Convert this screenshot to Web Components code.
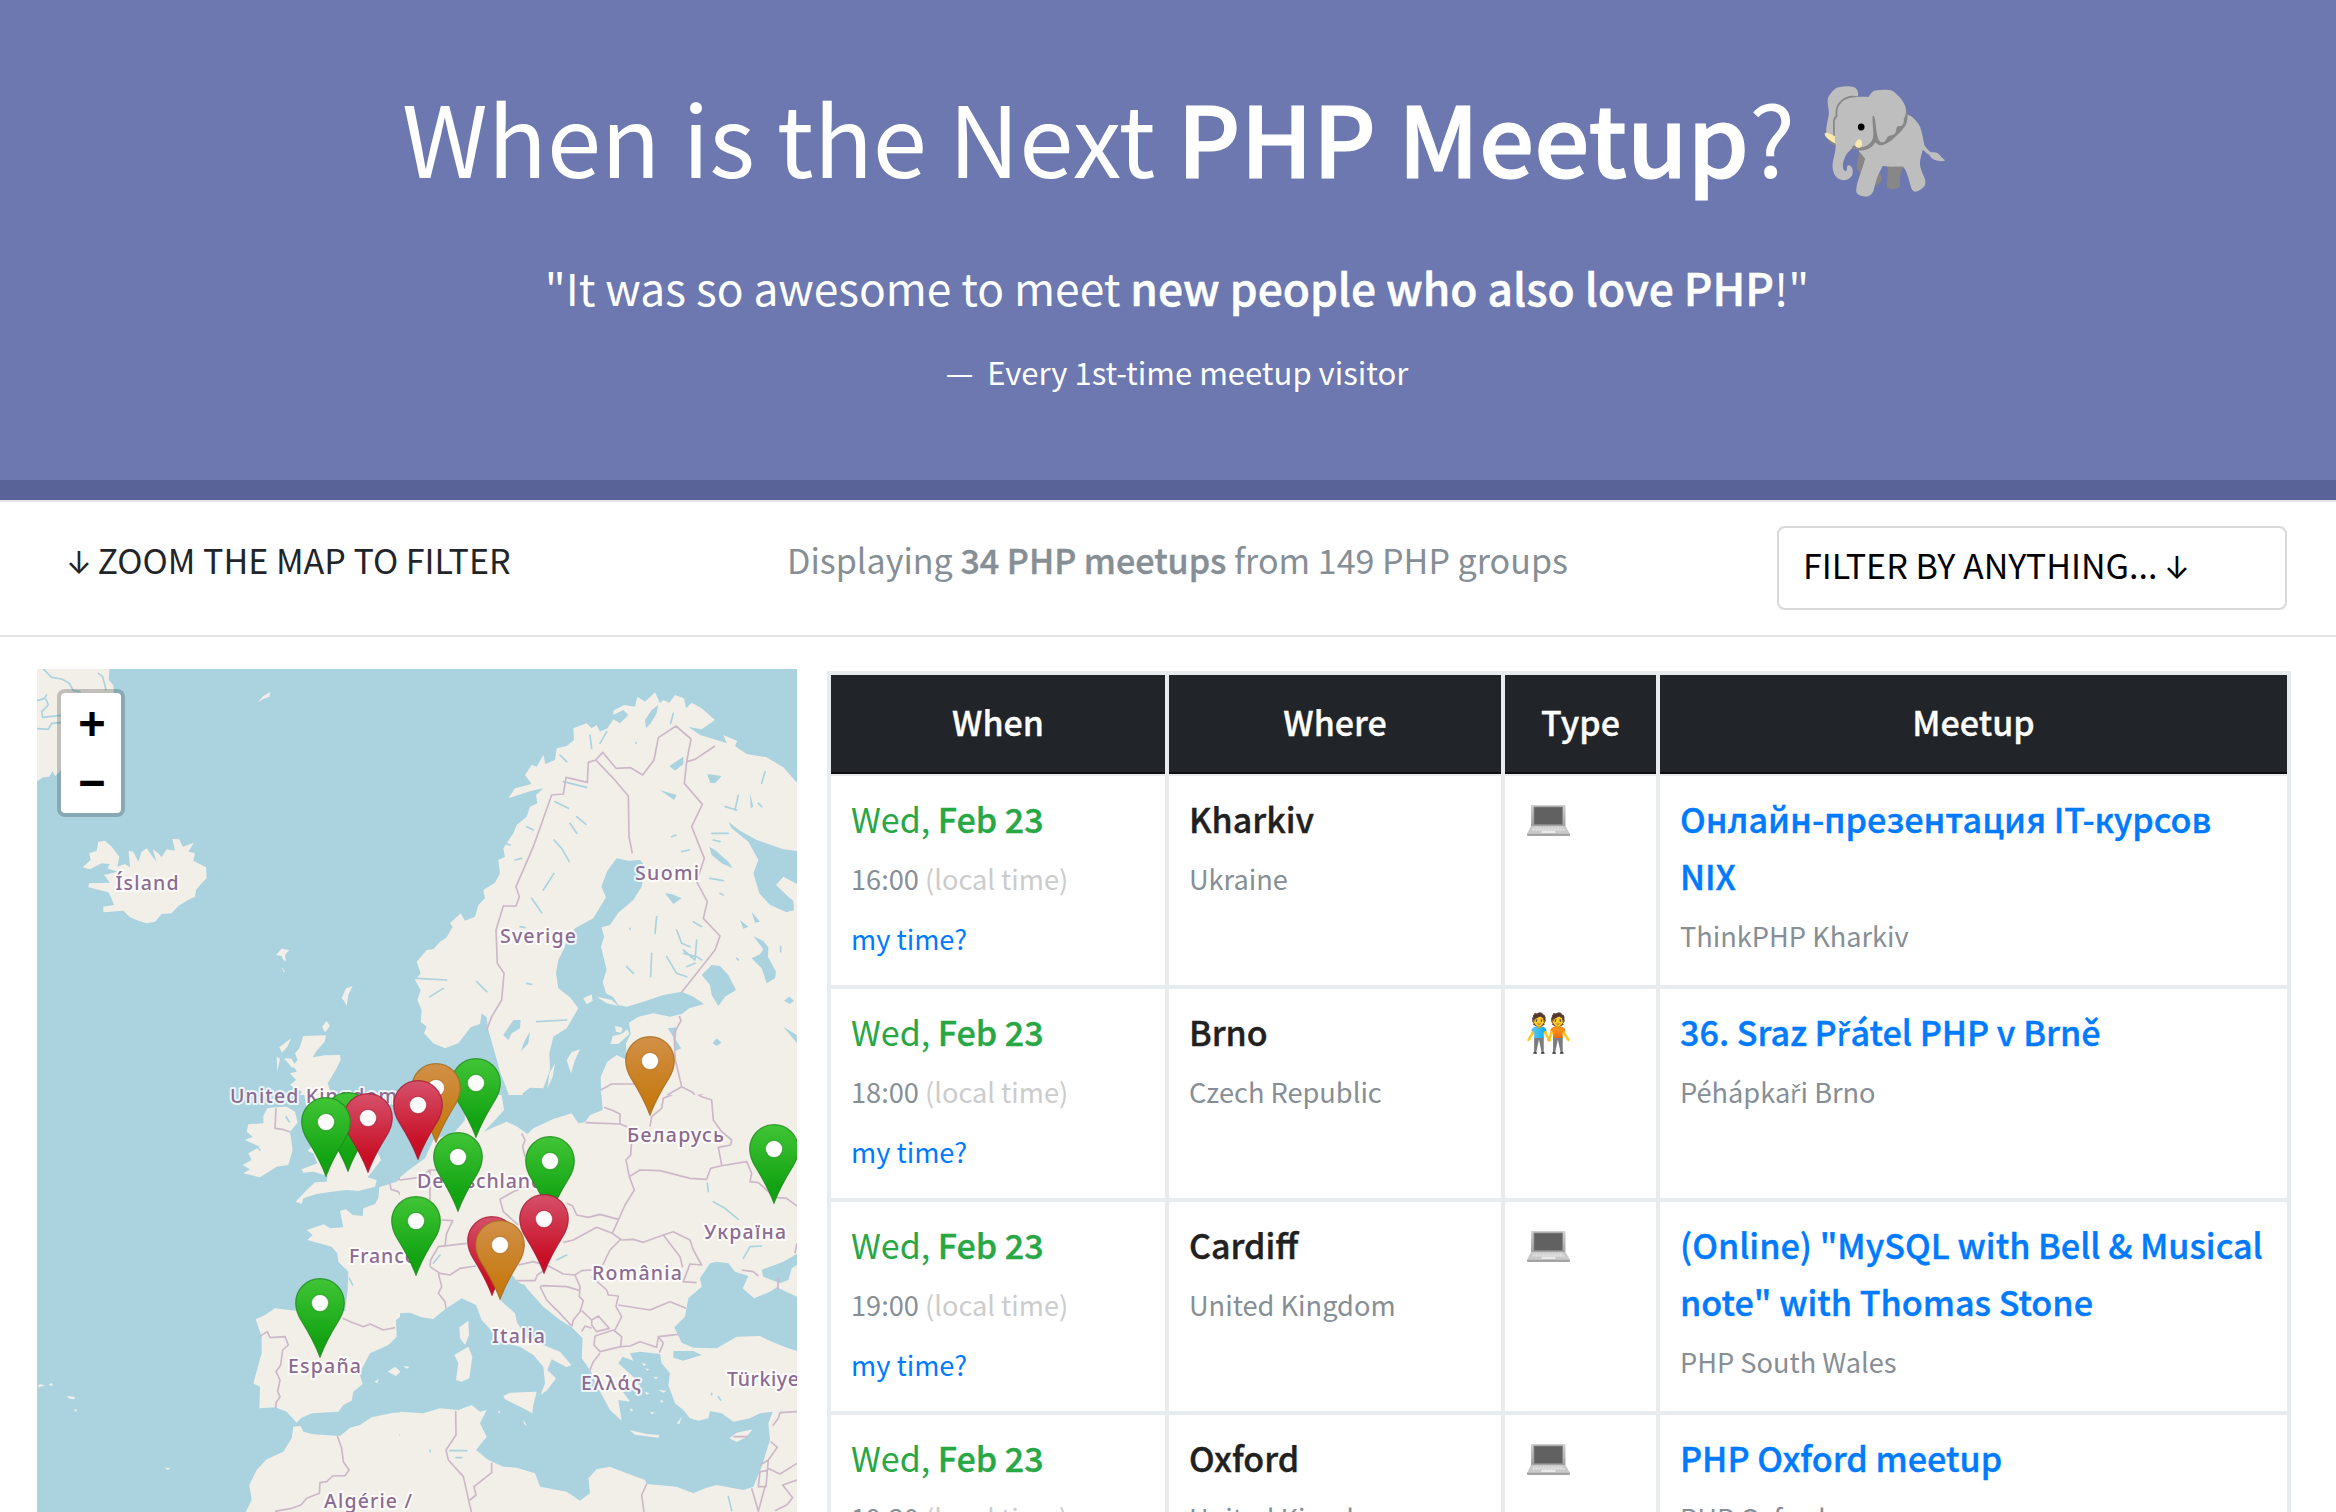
<!DOCTYPE html>
<html lang="en">
<head>
<meta charset="utf-8">
<title>When is the Next PHP Meetup?</title>
<style>
  html, body { margin: 0; height: 1512px; overflow: hidden; background: #fff; }
  body {
    font-family: "Noto Sans CJK SC", "Noto Color Emoji", sans-serif;
    color: #212529;
  }
</style>
</head>
<body>
<meetup-app></meetup-app>

<script>
const define = (name, html) => {
  const tpl = document.createElement('template');
  tpl.innerHTML = html;
  customElements.define(name, class extends HTMLElement {
    constructor() {
      super();
      this.attachShadow({ mode: 'open' }).append(tpl.content.cloneNode(true));
    }
  });
};

/* ---------- page header ---------- */
define('page-hero', `
<style>
  :host { display: flex; flex-direction: column; align-items: center; box-sizing: border-box; height: 500px;
    padding: 71px 0 0 18px; background: #6c78af; border-bottom: 20px solid #596398; color: #fff; white-space: nowrap; }
  h1 { margin: 0; padding-left: 1px; font-size: 97.6px; line-height: 130px; height: 130px; font-weight: 400; }
  b, ::slotted(b) { font-weight: 500; -webkit-text-stroke: .012em currentColor; }
  .emoji { font-family: "Noto Color Emoji"; font-size: 109px; line-height: 0; }
  .quote { margin: 56px 0 0; font-size: 44.3px; line-height: 60px; }
  .by { margin: 29.5px 0 0; font-size: 31px; line-height: 50px; }
</style>
<h1>When is the Next <b>PHP Meetup</b>? <span class="emoji">🐘</span></h1>
<p class="quote">"It was so awesome to meet <b>new people who also love PHP</b>!"</p>
<p class="by">—&nbsp; Every 1st-time meetup visitor</p>
`);

/* ---------- toolbar ---------- */
define('down-arrow', `
<style>:host { display: inline; font-family: Inter, sans-serif; font-size: 31px; line-height: 0; margin: 0 -2px 0 -1px; }</style>↓`);

define('filter-bar', `
<style>
  :host { display: grid; grid-template-columns: 720px 990px 510px; box-sizing: border-box; height: 137px; padding: 24px 0 0 67px;
    border-top: 2px solid #e5e5e5; border-bottom: 2px solid #e5e5e5; font-size: 34.05px; line-height: 50px; white-space: nowrap; }
  .hint { padding-top: 9px; }
  .count { padding-top: 9px; color: #868e96; }
  b { font-weight: 500; -webkit-text-stroke: .012em currentColor; }
  .box { box-sizing: border-box; height: 84px; padding: 12px 24px; border: 2px solid #d9d9d9; border-radius: 8px; color: #000; }
</style>
<div class="hint"><down-arrow></down-arrow> ZOOM THE MAP TO FILTER</div>
<div class="count">Displaying <b>34 PHP meetups</b> from 149 PHP groups</div>
<div class="box">FILTER BY ANYTHING... <down-arrow></down-arrow></div>
`);

/* ---------- table ---------- */
define('laptop-icon', `
<style>:host { display: block; width: 43px; height: 31px; } svg { display: block; }</style>
<svg width="43" height="31" viewBox="0 0 43 31">
  <defs><linearGradient id="b" x1="0" y1="0" x2="0" y2="1"><stop offset="0" stop-color="#cfcfcf"/><stop offset="1" stop-color="#a2a2a2"/></linearGradient></defs>
  <path d="M5 0H37.500Q38.500 0 38.500 1V21H4V1Q4 0 5 0Z" fill="url(#b)"/>
  <rect x="7" y="2" width="28.500" height="17.500" fill="#616161" stroke="#858585" stroke-width=".8"/>
  <path d="M4 21H38.500L43 29H0Z" fill="#c9c9c9"/>
  <path d="M6.500 23H36.500M5.500 24.800H37.500" stroke="#eee" stroke-width="1.200" stroke-dasharray="2 1"/>
  <path d="M15 25.800H28L28.800 28H14Z" fill="#eaeaea"/>
  <path d="M0 28.700H43V30Q43 31 42 31H1Q0 31 0 30Z" fill="#a3a3a3"/>
</svg>`);

define('meetup-head', `
<style>
  :host { display: grid; grid-template-columns: 334px 332px 151px 627px; column-gap: 4px; font-size: 34px; font-weight: 500; color: #fff; }
  div { height: 97px; line-height: 94px; text-align: center; background: #212529; border-bottom: 2px solid #0d0f10; -webkit-text-stroke: .01em currentColor; }
</style>
<div>When</div><div>Where</div><div>Type</div><div>Meetup</div>
`);

define('meetup-row', `
<style>
  :host { display: grid; grid-template-columns: 334px 332px 151px 627px; column-gap: 4px; height: 209px; margin-bottom: 4px;
    font-size: 34px; line-height: 57px; }
  .c { background: #fff; padding: 14px 0 0 20px; white-space: nowrap; overflow: hidden; }
  .date { color: #28a745; }
  b, .place, .title { font-weight: 500; -webkit-text-stroke: .012em currentColor; }
  .title { color: #007bff; font-size: 34.15px; }
  .place { color: #212121; }
  .small { font-size: 27.2px; padding-top: 3px; height: 57px; color: #868e96; }
  .small i { font-style: normal; color: #ccc; }
  .small.link { color: #007bff; }
  .emoji { font-family: "Noto Color Emoji"; font-size: 37.6px; line-height: 0; }
  ::slotted(laptop-icon) { margin: 15px 0 0 2px; }
</style>
<div class="c"><div class="date">Wed, <b>Feb 23</b></div><div class="small"><slot name="time"></slot> <i>(local time)</i></div><div class="small link">my time?</div></div>
<div class="c"><div class="place"><slot name="city"></slot></div><div class="small"><slot name="country"></slot></div></div>
<div class="c type"><span class="emoji"><slot name="type"></slot></span></div>
<div class="c"><div class="title"><slot name="title"></slot></div><div class="small"><slot name="group"></slot></div></div>
`);

define('meetup-table', `
<style>
  :host { display: block; box-sizing: border-box; width: 1464px; margin-top: 2px; padding: 4px; background: #e9ecef; }
  meetup-head { margin-bottom: 2px; }
  .cs { font-family: "Open Sans"; font-weight: 600; -webkit-text-stroke: 0; font-size: .93em; line-height: 0; }
  .cs.r { font-weight: 400; }
</style>
<meetup-head></meetup-head>
<meetup-row><span slot="time">16:00</span><span slot="city">Kharkiv</span><span slot="country">Ukraine</span><laptop-icon slot="type"></laptop-icon><span slot="title">Онлайн-презентация IT-курсов<br>NIX</span><span slot="group">ThinkPHP Kharkiv</span></meetup-row>
<meetup-row><span slot="time">18:00</span><span slot="city">Brno</span><span slot="country">Czech Republic</span><span slot="type">🧑‍🤝‍🧑</span><span slot="title">36. Sraz P<span class="cs">ř</span>átel PHP v Brně</span><span slot="group">Péhápka<span class="cs r">ř</span>i Brno</span></meetup-row>
<meetup-row><span slot="time">19:00</span><span slot="city">Cardiff</span><span slot="country">United Kingdom</span><laptop-icon slot="type"></laptop-icon><span slot="title">(Online) "MySQL with Bell &amp; Musical<br>note" with Thomas Stone</span><span slot="group">PHP South Wales</span></meetup-row>
<meetup-row><span slot="time">19:30</span><span slot="city">Oxford</span><span slot="country">United Kingdom</span><laptop-icon slot="type"></laptop-icon><span slot="title">PHP Oxford meetup</span><span slot="group">PHP Oxford</span></meetup-row>
`);

/* ---------- map ---------- */
define('zoom-control', `
<style>
  :host { display: block; width: 60px; border: 4px solid rgba(0,0,0,.2); border-radius: 8px; background: #fff; background-clip: padding-box; overflow: hidden; }
  div { height: 60px; box-sizing: border-box; font: bold 44px/60px "DejaVu Sans Mono", monospace; text-align: center; color: #000; padding-left: 2px; }
  div:first-child { border-bottom: 2px solid #ccc; }
  div:last-child { line-height: 57px; }
</style><div>+</div><div>−</div>`);

class MapPin extends HTMLElement {
  static colors = {
    green: ['#40c536', '#12a312', '#1f8a1b'],
    red: ['#d6506a', '#c80f25', '#a51c36'],
    amber: ['#d29048', '#c67a12', '#a66a1e']
  };
  connectedCallback() {
    const c = MapPin.colors[this.getAttribute('color')];
    this.attachShadow({ mode: 'open' }).innerHTML = `
<style>:host { display: block; width: 50px; height: 80px; } svg { display: block; }</style>
<svg width="50" height="80" viewBox="0 0 50 80">
<defs><linearGradient id="g" x1="0" y1="0" x2="0" y2="1"><stop offset="0" stop-color="${c[0]}"/><stop offset=".8" stop-color="${c[1]}"/></linearGradient></defs>
<path d="M25 79.2 C22 71 14 55 6.500 43 C2.500 36.500 .7 31 .7 25 C.7 11.500 11.500 .7 25 .7 C38.500 .7 49.300 11.500 49.300 25 C49.300 31 47.500 36.500 43.500 43 C36 55 28 71 25 79.200Z" fill="url(#g)" stroke="${c[2]}" stroke-width="1.2" stroke-opacity=".8"/>
<circle cx="25" cy="25" r="8.600" fill="#fdfdfd" stroke="${c[2]}" stroke-opacity=".55" stroke-width="1.200"/></svg>`;
  }
}
customElements.define('map-pin', MapPin);

define('map-tiles', `
<style>
  :host { display: block; }
  svg { display: block; }
  .l { fill: #f2efe9; }
  .w { fill: #aad3df; }
  .r { fill: none; stroke: #aad3df; stroke-width: 5; stroke-linecap: round; stroke-linejoin: round; }
  .b { fill: none; stroke: #ccb8c8; stroke-width: 5; stroke-linejoin: round; }
  text { font-family: "Noto Sans", sans-serif; font-size: 19.500px; font-weight: 500; fill: #8b6b91; stroke: #fff; stroke-opacity: .8; stroke-width: 4px; paint-order: stroke; stroke-linejoin: round; }
</style>
<svg width="760" height="843" viewBox="37 669 760 843">
<rect class="w" x="37" y="669" width="760" height="843"/>
<!-- north-west: Greenland, Iceland, Scotland -->
<svg x="37" y="669" width="363" height="426" viewBox="21 27 1089 1278">
  <path class="l" d="M0 0H240L236 60 250 75 252 110 230 120 90 335 75 348 68 333 58 350 40 352 21 364 0 370Z"/>
  <path class="r" d="M40 27L65 52 95 57 118 70 130 92 150 95M21 122L42 116 50 105M48 118L55 135 35 155 38 172 92 166M21 206L55 208 65 190 92 188M205 40L218 50 228 90" stroke-width="7"/>
  <path class="l" d="M158 622L182 600 178 580 200 572 205 545 225 542 245 560 268 590 262 620 285 612 300 622 296 572 310 575 325 605 335 575 350 565 364 585 380 606 368 568 385 580 395 592 410 568 435 572 427 537 448 538 458 560 492 548 475 575 495 580 490 602 528 622 530 655 515 670 498 690 495 710 470 722 445 738 425 760 395 762 375 785 350 790 325 782 300 772 280 752 220 757 220 740 252 735 243 712 235 697 175 682 178 670 240 668 222 645 262 635 232 625 240 612 215 610 180 628Z"/>
  <path class="l" d="M682 128L700 108 722 95 718 110 698 118ZM738 885L755 866 778 870 765 885 768 905 760 900 755 888ZM754 920L766 937 760 935ZM935 1015L948 985 968 978 955 1005 950 1038 942 1022ZM876 1100L890 1083 900 1098 885 1117ZM740 1190L750 1196 742 1235ZM748 1162L783 1135 772 1160 756 1178ZM762 1195L785 1196 800 1225 785 1222Z"/>
  <path class="l" d="M820 1128L888 1126 884 1145 860 1172 848 1192 885 1186 930 1185 932 1200 918 1228 905 1250 893 1270 910 1320H800L815 1295 780 1275 798 1260 780 1240 800 1235 790 1215 803 1200 795 1180 808 1165Z"/>
</svg>
<!-- north-east: Scandinavia, Finland, north-west Russia -->
<svg x="400" y="669" width="397" height="426" viewBox="0 27 1191 1278">
  <path class="l" d="M135 1165L100 1150 72 1120 80 1100 62 1085 65 1050 52 1020 62 990 45 960 62 940 50 905 80 870 100 868 120 845 140 832 158 800 150 790 182 760 195 782 225 770 235 735 255 715 250 690 285 668 300 640 295 600 315 590 310 565 340 520 350 495 380 470 390 440 412 430 408 405 430 385 395 392 325 415 345 385 395 372 375 345 395 315 410 320 430 285 436 312 465 300 470 265 500 258 522 240 520 205 560 190 575 205 590 195 600 215 622 205 640 178 660 190 685 165 670 150 640 165 640 152 672 135 705 140 712 110 735 125 765 97 780 130 790 120 808 128 825 105 852 115 858 145 875 128 905 145 922 160 945 180 905 208 865 200 900 225 950 240 980 250 970 225 1012 243 1005 258 1040 282 1100 292 1150 322 1191 368 1250 400V1400H330L325 1300 300 1235 285 1180 265 1110 260 1072 245 1060 240 1092 212 1102 175 1150Z"/>
  <path class="w" d="M650 595L685 602 720 600 736 620 725 680 700 720 655 758 630 795 605 802 612 830 603 860 620 930 608 965 618 1000 640 1012 655 1035 680 1040 730 1025 790 1005 845 995 880 1010 912 1032 868 1045 845 1062 810 1070 760 1060 715 1070 687 1088 692 1122 678 1150 680 1200 650 1185 622 1205 602 1250 606 1400H380L368 1300 390 1283 430 1285 450 1230 448 1180 460 1130 500 1105 535 1045 510 1012 475 985 468 940 475 900 495 860 500 840 525 805 580 775 598 745 618 712 604 680 622 632Z"/>
  <path class="w" d="M985 485L1020 512 1070 540 1150 568 1250 580V690L1191 672 1150 650 1128 675 1165 710 1180 722 1182 750 1160 757 1110 735 1078 700 1060 640 1075 600 1045 545 995 505ZM738 205L735 180 755 150 775 135 770 160 752 190Z"/>
  <path class="w" d="M935 915L960 918 985 945 1008 990 975 1010 955 1038 935 1005 930 975 905 945ZM1060 828L1090 843 1105 862 1104 890 1128 935 1125 955 1100 970 1085 925 1055 895 1080 883 1090 868ZM310 1125L340 1080 362 1080 360 1105 335 1120 325 1140ZM362 1175L375 1140 390 1115 385 1150ZM803 1105L830 1102 828 1140 843 1165 828 1172 820 1130ZM808 318L850 290 850 312 825 332ZM795 700L815 702 845 715 820 732ZM928 560L945 570 985 605 998 625 965 610 935 585ZM922 342L965 348 945 370 930 368ZM1152 1022L1168 1010 1182 1022 1170 1032ZM938 1150L950 1135 965 1148 950 1158ZM1150 1100L1190 1125 1191 1150ZM1050 400L1060 440 1052 445ZM780 390L830 405 822 420ZM310 1085L330 1100ZM1055 755L1080 785 1065 788ZM1020 780L1045 800 1030 806Z"/>
  <path class="r" d="M465 425L505 445M530 470L558 493M462 540L485 565 508 605M430 690L462 640M395 715L425 758M510 490L530 520M490 365L560 382M845 575L868 570M815 530L828 525M930 655L970 662M880 785L905 800M770 770L765 820M830 810L845 850 870 860M850 880L890 890 905 900M860 920L885 910M755 880L752 950M800 890L830 940 860 950M680 920L700 940M890 840L885 900 850 870M1005 450L1015 405M975 440L1010 450M1085 370L1095 335M1142 860V875M935 520L985 520M940 540L960 545M230 965L260 995M380 970L395 973M50 955L140 960M90 1010L130 985M360 800L375 803M410 1085L500 1080M1075 430L1085 440M960 700L970 705M690 805V808M708 248V250M330 555L300 545M380 500L400 510M620 215L600 250M570 225L575 265M480 285L500 305M820 160L812 190M345 600L365 595M1010 895L1015 900" stroke-width="6"/>
  <path class="l" d="M632 1152L638 1128 665 1122 682 1108 688 1122 655 1152ZM645 1098L668 1103 664 1118 648 1115ZM500 1200L515 1176 540 1168 525 1200 513 1240ZM550 1015L575 1003 578 1022 560 1033ZM590 1010L635 1020 655 1038 620 1030ZM442 1285L448 1240 465 1210 458 1250Z"/>
  <path class="b" d="M260 1110L275 1070 305 1020 312 940 292 910 288 810 310 738 348 738 358 710 348 680 400 560 455 405 490 402 498 352 562 367 565 307 587 300 608 277 648 325 692 323 728 345 762 300 775 233 828 198 873 237 860 305 853 370 907 433 875 500 913 595 890 665 922 725 910 775 960 828 945 870 845 997M860 305L885 298 945 258M587 300L640 355 685 408 687 530 697 580M838 1068L843 1082 822 1120 826 1200 845 1280 880 1298 884 1308 905 1305 940 1320M602 1290L635 1272H720M780 1318L845 1280"/>
</svg>
<!-- south-west: British Isles, France, Iberia, Morocco -->
<svg x="37" y="1095" width="363" height="417" viewBox="21 15 1089 1251">
  <path class="l" d="M700 78L712 55 735 52 770 50 795 65 803 98 780 125 788 180 775 225 740 230 690 262 640 250 660 238 638 225 665 210 655 190 690 170 645 150 668 140 650 125 655 103 700 100Z"/>
  <path class="l" d="M820 0H910L965 60 985 110 1010 160 1040 180 1053 210 1030 240 1013 262 1040 270 1035 290 985 303 950 300 905 305 860 312 820 325 815 342 797 335 830 300 855 277 890 275 893 258 850 245 820 248 815 238 862 220 850 190 833 183 862 150 850 100 830 50Z"/>
  <path class="l" d="M1250 0L1185 190 1170 205 1145 235 1100 275 1048 292 1045 325 1035 342 1000 355 998 378 968 375 948 358 930 362 940 412 900 415 882 403 830 420 848 435 832 450 905 470 922 490 925 515 955 545 953 600 945 663 795 662 735 655 705 675 677 688 695 740 695 790 670 880 690 890 688 955 735 952 770 965 800 998 812 985 845 970 925 965 940 945 965 932 970 905 998 882 988 850 1020 790 1075 765 1100 740 1098 690 1130 665 1200 685H1250Z"/>
  <path class="l" d="M790 1010L812 1008 820 1025 850 1033 930 1038 960 1013 990 1005 1025 982 1090 968 1180 965H1250V1300H630L665 1230 658 1185 680 1140 710 1108 760 1085 785 1045ZM1073 845L1095 830 1112 845 1098 858ZM1120 828L1142 828 1135 835ZM1034 875L1046 866 1042 880ZM21 892L30 882 46 887ZM56 884L66 878 68 888ZM110 918L135 921 132 928 118 926ZM403 1133L422 1134 414 1140ZM134 958H140V964H134Z"/>
  <path class="r" d="M958 565L968 585M768 80L778 95M1110 1035H1118M680 170L690 180" stroke-width="5"/>
  <path class="b" d="M738 55L735 115 758 118 780 126M688 740L712 725 720 743 765 740 775 765 758 780 752 825 738 845 750 870 743 905 750 920 738 938V955M938 685L965 697 1000 710 1020 702 1060 720 1095 713M1080 280L1083 298 1105 305 1125 335M1105 268L1140 275 1165 262M922 1038L935 1075 940 1115 957 1140 945 1157 908 1158 890 1175 870 1178 868 1210 830 1225 813 1245 785 1255 735 1264"/>
</svg>
<!-- south-east: central Europe, Mediterranean, Black Sea -->
<svg x="400" y="1095" width="397" height="417" viewBox="0 15 1191 1251">
  <rect class="l" width="1250" height="1400"/>
  <path class="w" d="M0 0H190L195 90 165 125 100 150 75 205 40 230 20 245 0 262ZM252 125L290 85 312 60 305 15 320 0H370L365 35 345 42 330 25 335 0H603L608 60 570 75 555 97 535 100 515 70 460 87 400 115 382 132 352 110 320 95 290 108Z"/>
  <path class="w" d="M930 520L950 515 985 520 1005 545 1045 558 1028 595 1062 625 1110 605 1130 592 1191 620 1250 640V790L1191 783 1165 775 1115 755 1080 738 1010 740 950 775 880 773 845 758 823 712 855 680 865 625 905 590 900 565ZM1250 480L1191 492 1150 515 1085 540 1090 560 1140 580 1165 570 1175 535 1191 525 1250 530ZM820 783H880L905 795 850 812 820 803Z"/>
  <path class="w" d="M0 670L30 668 65 682 100 687 135 658 185 625 228 645 245 690 275 722 300 755 360 770 400 795 430 830 435 880 422 915 442 900 468 865 442 840 455 808 500 832 514 825 480 785 430 765 380 745 350 695 345 670 300 630 315 585 335 552 352 575 385 600 430 650 480 690 515 712 548 745 545 805 570 840 595 895 630 960 665 992 655 930 690 935 665 900 722 890 700 860 655 820 668 800 700 812 690 790 720 785 780 792 785 820 810 850 805 885 825 940 850 960 870 985 895 992 925 985 930 963 965 970 1000 995 1050 985 1080 970 1118 965 1105 1000 1110 1050 1085 1130 1060 1190 1030 1200 950 1185 915 1195 880 1210 830 1190 740 1182 735 1170 680 1150 630 1130 590 1138 565 1165 570 1210 540 1232 500 1205 420 1190 405 1150 350 1133 310 1130 265 1110 228 1080 260 1040 240 1000 260 960 240 965 215 945 175 960 120 955 70 970 0 965Z"/>
  <path class="l" d="M178 712L205 692 207 735 195 765 180 745ZM163 795L205 770 217 800 208 865 185 875 168 870 175 820ZM310 918L330 908 410 905 400 945 397 970 375 958 350 945 315 928ZM688 1020L740 1032 778 1035 775 1043 705 1034ZM988 1045L1010 1028 1058 1018 1038 1042 1010 1056ZM830 1000L846 980 838 1002ZM10 828L30 830 20 836ZM370 990L382 1008 372 1002ZM735 905L748 910 740 915ZM760 860L775 862 768 868ZM725 820L740 822 732 828ZM775 900L800 902 790 908ZM750 965L765 968 755 973ZM690 955L700 960 692 965ZM780 930L790 932 785 940ZM735 835L748 838 742 842ZM295 963H300V968H295Z"/>
  <path class="r" d="M922 280L925 305M940 335L975 355 1015 388M1030 505L1050 470 1085 468M470 510L500 495M100 520L120 495M150 1082H200M168 1103H185M90 1080V1085M935 910V915M955 920L962 930M985 1220L995 1262M370 585L410 640 460 690M355 580L375 590" stroke-width="6"/>
  <path class="b" d="M365 130L375 150 368 170 375 200M557 98L660 102 685 112M612 52L640 62 660 72 660 102M695 150L692 195 678 210 688 260 703 300 675 345 655 390 637 430M688 260L720 240 780 242 870 265 920 268 932 235 960 228 1040 215 1055 250 1050 275 1075 278 1100 300 1125 322 1160 325 1191 348M965 225L955 172 992 165 995 150 965 125 940 90 935 30 905 20 880 5 850 0 790 25 785 55 755 80 750 110M375 290L340 305 300 328 310 365 355 405M500 340L518 348 530 375 565 382 600 373 655 388M490 457L520 450 590 412 637 430 665 450 700 448 730 457 790 435 820 425 870 450 880 480 905 525 870 522 850 575 890 578M790 435L840 500 848 532M660 450L630 480 608 525M450 530L490 552 525 555 545 542 575 540M525 555L540 590 538 620 550 632 540 665 520 690 515 710M420 590L430 587 500 590 540 602M420 590L440 630 480 670 515 708M545 662L575 690 595 678 628 715 590 725 575 705 575 690M575 560L620 600 625 615 655 618 648 650 665 680 645 720M655 645L750 660 810 635 858 655M585 738L640 720 665 740 662 770 600 785 582 765ZM662 770L690 768 720 755 770 772 775 740 835 733M775 740L790 760 778 788M570 840L580 815 600 790M545 725L555 708 575 715M0 270L60 262 90 240 130 240M90 240V330M125 390L158 392 140 430 135 468M90 530L92 510 115 470 200 460M90 530L120 550 150 555 180 535 228 528M115 550L125 590 115 610 135 635 138 655M355 525L400 515 450 530M350 572L405 572 412 555 440 535M167 962L168 1035 138 1080 145 1110 190 1160 214 1266M275 1118V1148L222 1190 228 1215 210 1230M740 1182L725 1215 732 1266M1191 965L1140 968 1135 985 1118 1007M1112 1055L1132 1072 1105 1110 1080 1125M1105 1110L1098 1190H1075L1080 1145 1100 1142M1055 1195L1075 1264 1095 1190M1103 1135L1140 1152 1191 1120M1191 1170L1148 1185 1178 1223 1160 1245 1125 1262M1025 540L1060 545 1075 558M1134 565V597M1000 1040H1045M1191 460L1185 490"/>
</svg>
<text x="115.500" y="890" textLength="63">Ísland</text>
<text x="500" y="943" textLength="76">Sverige</text>
<text x="635" y="880" textLength="64">Suomi</text>
<text x="230" y="1102.500" textLength="167">United Kingdom</text>
<text x="417" y="1187.500" textLength="126">Deutschland</text>
<text x="349" y="1262.500" textLength="67">France</text>
<text x="288" y="1372.500" textLength="73">España</text>
<text x="492" y="1342.500" textLength="53">Italia</text>
<text x="592" y="1280" textLength="90">România</text>
<text x="581" y="1390" textLength="60">Ελλάς</text>
<text x="727" y="1386" textLength="72">Türkiye</text>
<text x="704" y="1238.500" textLength="82">Україна</text>
<text x="627" y="1142" textLength="97">Беларусь</text>
<text x="324" y="1507.500" textLength="88">Algérie /</text>
</svg>`);

class MeetupMap extends HTMLElement {
  static pins = [
    ['amber', 650, 1116], ['green', 476, 1138], ['amber', 436, 1143], ['red', 418, 1160],
    ['green', 348, 1172], ['red', 368, 1172.5], ['green', 326, 1176.500], ['green', 774, 1204],
    ['green', 458, 1212], ['green', 550, 1216], ['red', 544, 1274], ['green', 416, 1276],
    ['red', 492, 1296], ['amber', 500, 1300], ['green', 320, 1358]
  ];
  connectedCallback() {
    this.attachShadow({ mode: 'open' }).innerHTML = `
<style>
  :host { display: block; position: relative; width: 760px; height: 843px; overflow: hidden; }
  map-pin, zoom-control { position: absolute; }
  zoom-control { left: 20px; top: 20px; }
</style>
<map-tiles></map-tiles>` +
      MeetupMap.pins.map(([c, x, y]) => `<map-pin color="${c}" style="left:${x - 62}px;top:${y - 749}px"></map-pin>`).join('') +
      '<zoom-control></zoom-control>';
  }
}
customElements.define('meetup-map', MeetupMap);

define('meetup-app', `
<style>
  :host { display: flex; flex-direction: column; height: 1512px; overflow: hidden; }
  page-hero, filter-bar { flex: none; }
  main { display: flex; align-items: flex-start; gap: 30px; padding: 32px 0 0 37px; height: 843px; overflow: hidden; }
  meetup-map, meetup-table { flex: none; }
</style>
<page-hero></page-hero>
<filter-bar></filter-bar>
<main><meetup-map></meetup-map><meetup-table></meetup-table></main>
`);
</script>
</body>
</html>
